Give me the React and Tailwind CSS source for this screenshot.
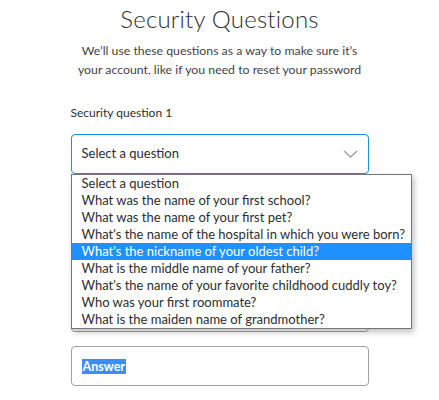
import React from "react";

const questions = [
  "Select a question",
  "What was the name of your first school?",
  "What was the name of your first pet?",
  "What's the name of the hospital in which you were born?",
  "What's the nickname of your oldest child?",
  "What is the middle name of your father?",
  "What's the name of your favorite childhood cuddly toy?",
  "Who was your first roommate?",
  "What is the maiden name of grandmother?",
];

function Chevron() {
  return (
    <svg width="15" height="8" viewBox="0 0 15 8" fill="none">
      <path d="M1 1 L7.5 7 L14 1" stroke="#9aa0a3" strokeWidth="1.3" />
    </svg>
  );
}

export default function App() {
  return (
    <div
      className="w-[439px] h-[400px] bg-white overflow-hidden text-[#2c2e2f]"
      style={{ fontFamily: "Lato, 'Noto Sans', sans-serif" }}
    >
      <div className="flex flex-col items-center">
        <h1 className="mt-[3px] text-[24px] leading-[32px] font-light text-[#2c2e2f] tracking-[0.2px]">
          Security Questions
        </h1>
        <p className="mt-[6px] text-[12.3px] leading-[19px] text-center text-[#444]">
          We’ll use these questions as a way to make sure it’s
          <br />
          your account, like if you need to reset your password
        </p>
      </div>
      <div className="w-[298px] mx-auto mt-[26px] flex flex-col">
        <label className="text-[12px] leading-[16px] text-[#2c2e2f]">
          Security question 1
        </label>
        <div className="relative mt-[13px]">
          <div className="h-[40px] rounded-[4px] border border-[#1294da] flex items-center justify-between pl-[10px] pr-[10px]">
            <span className="text-[13px] text-[#2c2e2f]">Select a question</span>
            <Chevron />
          </div>
          <ul className="absolute left-0 top-[40px] w-[341px] bg-white border border-[#767676] shadow-[2px_3px_6px_rgba(0,0,0,0.25)] z-10 py-0">
            {questions.map((q, i) => (
              <li
                key={q}
                className={
                  "h-[17px] leading-[17px] text-[13px] pl-[10px] whitespace-nowrap " +
                  (i === 4 ? "bg-[#1e90ff] text-white" : "text-[#2c2e2f]")
                }
              >
                {q}
              </li>
            ))}
          </ul>
        </div>
        <div className="mt-[12px] h-[40px] rounded-[4px] border border-[#9da3a6]" />
        <div className="mt-[66px] h-[40px] rounded-[4px] border border-[#9da3a6]" />
        <div className="mt-[14px] h-[40px] rounded-[4px] border border-[#9da3a6] flex items-center pl-[10px]">
          <span className="bg-[#3b8ff2] text-white text-[12.5px] font-bold leading-[15px] px-[1px]">
            Answer
          </span>
        </div>
      </div>
    </div>
  );
}
